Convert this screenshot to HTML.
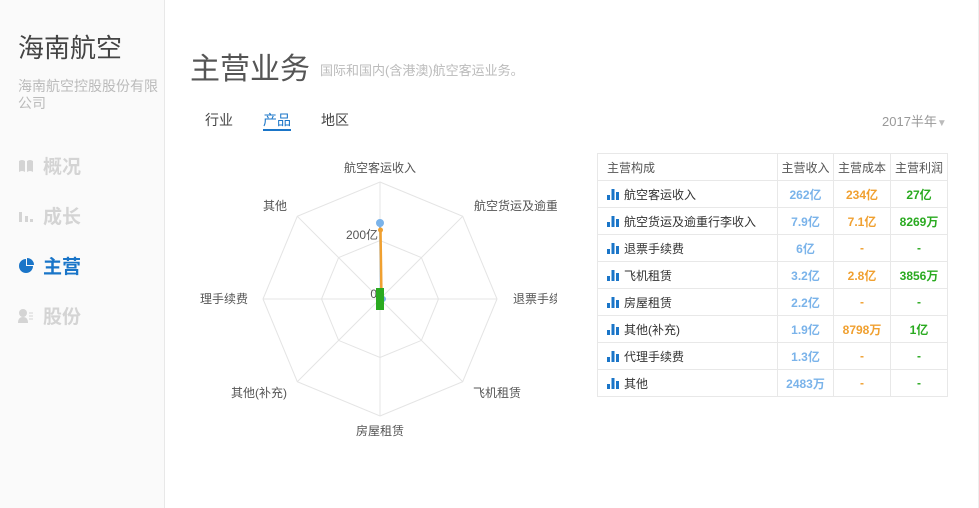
<!DOCTYPE html>
<html><head><meta charset="utf-8"><style>
*{margin:0;padding:0;box-sizing:border-box}
body{width:979px;height:508px;overflow:hidden;background:#fff;font-family:"Liberation Sans","Noto Sans CJK SC",sans-serif;position:relative;color:#333}
.side{position:absolute;left:0;top:0;width:165px;height:508px;background:#fafafa;border-right:1px solid #e8e8e8}
.abs{position:absolute;white-space:nowrap}
.nav{position:absolute;left:18px;font-size:19px;font-weight:bold;color:#d4d4d4;display:flex;align-items:center}
.nav svg{margin-right:9px}
table{position:absolute;left:597px;top:153px;border-collapse:collapse;font-size:12px}
td{border:1px solid #e8e8e8;height:27px;padding:0}
td.n{padding-left:9px;color:#333;width:180px}
td.v{text-align:center;font-weight:bold}
.b{color:#7ab3ea}.o{color:#f0a030}.g{color:#2aaa20}
.ic{display:inline-block;vertical-align:-1px;margin-right:5px}
</style></head><body>
<div class="side">
<div class="abs" style="left:18px;top:28px;font-size:26px;color:#444">海南航空</div>
<div class="abs" style="left:18px;top:78px;font-size:14px;color:#bbb;line-height:17px;white-space:normal;width:143px">海南航空控股股份有限公司</div>
<div class="nav" style="top:152px"><svg width="16" height="14"><path d="M1 2q3-2 6 0v11q-3-2-6 0z M9 2q3-2 6 0v11q-3-2-6 0z" fill="#d4d4d4"/></svg>概况</div>
<div class="nav" style="top:202px"><svg width="16" height="14"><rect x="1" y="3" width="3" height="10" fill="#d4d4d4"/><rect x="7" y="7" width="3" height="6" fill="#d4d4d4"/><rect x="12" y="10" width="3" height="3" fill="#d4d4d4"/></svg>成长</div>
<div class="nav" style="top:252px;color:#1a75c8"><svg width="16" height="16"><path d="M8 1a7 7 0 1 0 7 7H8z" fill="#1a75c8"/><path d="M9 0v7h7a7 7 0 0 0-7-7z" fill="#1a75c8"/></svg>主营</div>
<div class="nav" style="top:302px"><svg width="16" height="16"><circle cx="5" cy="5" r="4" fill="#d4d4d4"/><path d="M0 15q0-6 5-6t5 6z" fill="#d4d4d4"/><path d="M11 5h4M11 8h4M11 11h4" stroke="#d4d4d4"/></svg>股份</div>
</div>
<div class="abs" style="left:190px;top:44px;font-size:30px;color:#555">主营业务</div>
<div class="abs" style="left:320px;top:60px;font-size:13px;color:#bbb">国际和国内(含港澳)航空客运业务。</div>
<div class="abs" style="left:205px;top:110px;font-size:14px;color:#444">行业</div>
<div class="abs" style="left:263px;top:110px;font-size:14px;color:#1a75c8">产品</div>
<div class="abs" style="left:263px;top:129px;width:28px;height:2px;background:#1a75c8"></div>
<div class="abs" style="left:321px;top:110px;font-size:14px;color:#444">地区</div>
<div class="abs" style="left:882px;top:111px;font-size:13px;color:#999">2017半年<span style="font-size:10px;color:#bbb">▼</span></div>
<div class="abs" style="right:0;top:0;width:1px;height:508px;background:#eee"></div>
<svg class="abs" style="left:0;top:0" width="979" height="508">
<defs><clipPath id="c"><rect x="190" y="140" width="367" height="310"/></clipPath></defs>
<g fill="none" stroke="#e4e4e4" stroke-width="1">
<polygon points="380,182 462.7,216.3 497,299 462.7,381.7 380,416 297.3,381.7 263,299 297.3,216.3"/>
<polygon points="380,240.5 421.4,257.6 438.5,299 421.4,340.4 380,357.5 338.6,340.4 321.5,299 338.6,257.6"/>
<path d="M380 182V416M263 299H497M297.3 216.3L462.7 381.7M462.7 216.3L297.3 381.7"/>
</g>
<g font-size="12" fill="#555" font-family="Liberation Sans,Noto Sans CJK SC,sans-serif" clip-path="url(#c)">
<text x="380" y="172" text-anchor="middle">航空客运收入</text>
<text x="474" y="210">航空货运及逾重行李</text>
<text x="513" y="303">退票手续费</text>
<text x="473" y="397">飞机租赁</text>
<text x="380" y="435" text-anchor="middle">房屋租赁</text>
<text x="287" y="397" text-anchor="end">其他(补充)</text>
<text x="248" y="303" text-anchor="end">理手续费</text>
<text x="287" y="210" text-anchor="end">其他</text>
<text x="378" y="239" text-anchor="end">200亿</text>
<text x="377" y="298" text-anchor="end">0</text>
</g>
<line x1="380" y1="223" x2="381" y2="299" stroke="#7ab3ea" stroke-width="2"/>
<circle cx="380" cy="223" r="4" fill="#7ab3ea"/>
<line x1="380.5" y1="230" x2="381.5" y2="299" stroke="#f0a030" stroke-width="2.5"/>
<circle cx="380.5" cy="230" r="2.5" fill="#f0a030"/>
<circle cx="383" cy="299" r="3" fill="#7ab3ea"/>
<rect x="376" y="288" width="8" height="22" fill="#2aaa20"/>
</svg>
<table>
<tr><td class="n" style="color:#555">主营构成</td><td style="width:56px;text-align:center;color:#555">主营收入</td><td style="width:57px;text-align:center;color:#555">主营成本</td><td style="width:57px;text-align:center;color:#555">主营利润</td></tr>
<tr><td class="n"><svg class="ic" width="12" height="11"><rect x="0" y="6" width="3" height="5" fill="#1a75c8"/><rect x="4.5" y="0" width="3" height="11" fill="#1a75c8"/><rect x="9" y="3" width="3" height="8" fill="#1a75c8"/></svg>航空客运收入</td><td class="v b">262亿</td><td class="v o">234亿</td><td class="v g">27亿</td></tr>
<tr><td class="n"><svg class="ic" width="12" height="11"><rect x="0" y="6" width="3" height="5" fill="#1a75c8"/><rect x="4.5" y="0" width="3" height="11" fill="#1a75c8"/><rect x="9" y="3" width="3" height="8" fill="#1a75c8"/></svg>航空货运及逾重行李收入</td><td class="v b">7.9亿</td><td class="v o">7.1亿</td><td class="v g">8269万</td></tr>
<tr><td class="n"><svg class="ic" width="12" height="11"><rect x="0" y="6" width="3" height="5" fill="#1a75c8"/><rect x="4.5" y="0" width="3" height="11" fill="#1a75c8"/><rect x="9" y="3" width="3" height="8" fill="#1a75c8"/></svg>退票手续费</td><td class="v b">6亿</td><td class="v o">-</td><td class="v g">-</td></tr>
<tr><td class="n"><svg class="ic" width="12" height="11"><rect x="0" y="6" width="3" height="5" fill="#1a75c8"/><rect x="4.5" y="0" width="3" height="11" fill="#1a75c8"/><rect x="9" y="3" width="3" height="8" fill="#1a75c8"/></svg>飞机租赁</td><td class="v b">3.2亿</td><td class="v o">2.8亿</td><td class="v g">3856万</td></tr>
<tr><td class="n"><svg class="ic" width="12" height="11"><rect x="0" y="6" width="3" height="5" fill="#1a75c8"/><rect x="4.5" y="0" width="3" height="11" fill="#1a75c8"/><rect x="9" y="3" width="3" height="8" fill="#1a75c8"/></svg>房屋租赁</td><td class="v b">2.2亿</td><td class="v o">-</td><td class="v g">-</td></tr>
<tr><td class="n"><svg class="ic" width="12" height="11"><rect x="0" y="6" width="3" height="5" fill="#1a75c8"/><rect x="4.5" y="0" width="3" height="11" fill="#1a75c8"/><rect x="9" y="3" width="3" height="8" fill="#1a75c8"/></svg>其他(补充)</td><td class="v b">1.9亿</td><td class="v o">8798万</td><td class="v g">1亿</td></tr>
<tr><td class="n"><svg class="ic" width="12" height="11"><rect x="0" y="6" width="3" height="5" fill="#1a75c8"/><rect x="4.5" y="0" width="3" height="11" fill="#1a75c8"/><rect x="9" y="3" width="3" height="8" fill="#1a75c8"/></svg>代理手续费</td><td class="v b">1.3亿</td><td class="v o">-</td><td class="v g">-</td></tr>
<tr><td class="n"><svg class="ic" width="12" height="11"><rect x="0" y="6" width="3" height="5" fill="#1a75c8"/><rect x="4.5" y="0" width="3" height="11" fill="#1a75c8"/><rect x="9" y="3" width="3" height="8" fill="#1a75c8"/></svg>其他</td><td class="v b">2483万</td><td class="v o">-</td><td class="v g">-</td></tr>
</table>
</body></html>
